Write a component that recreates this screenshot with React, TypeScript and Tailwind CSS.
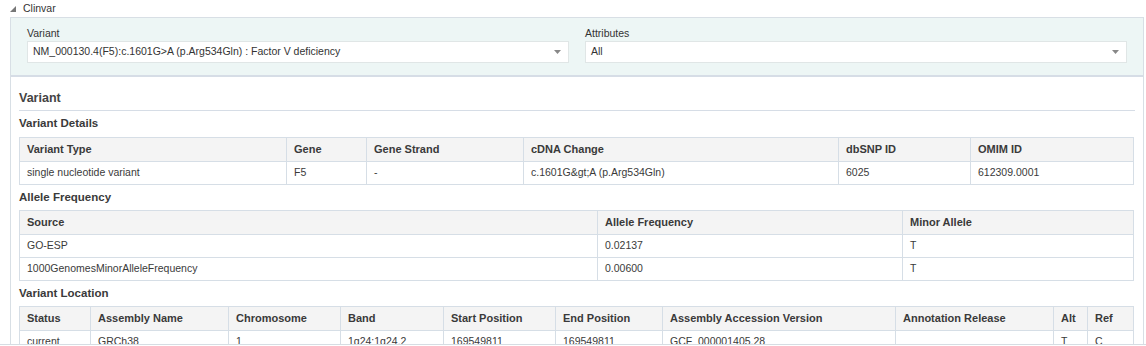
import React from 'react';

type Table = { widths: number[]; head: string[]; rows: string[][] };

const details: Table = {
  widths: [267, 80, 157, 315, 132, 163],
  head: ['Variant Type', 'Gene', 'Gene Strand', 'cDNA Change', 'dbSNP ID', 'OMIM ID'],
  rows: [['single nucleotide variant', 'F5', '-', 'c.1601G&gt;A (p.Arg534Gln)', '6025', '612309.0001']],
};

const frequency: Table = {
  widths: [578, 305, 231],
  head: ['Source', 'Allele Frequency', 'Minor Allele'],
  rows: [
    ['GO-ESP', '0.02137', 'T'],
    ['1000GenomesMinorAlleleFrequency', '0.00600', 'T'],
  ],
};

const location: Table = {
  widths: [71, 138, 112, 103, 112, 107, 233, 158, 34, 46],
  head: ['Status', 'Assembly Name', 'Chromosome', 'Band', 'Start Position', 'End Position', 'Assembly Accession Version', 'Annotation Release', 'Alt', 'Ref'],
  rows: [['current', 'GRCh38', '1', '1q24:1q24.2', '169549811', '169549811', 'GCF_000001405.28', '', 'T', 'C']],
};

function DataTable({ table }: { table: Table }) {
  return (
    <table className="w-[1114px] table-fixed border-collapse border border-[#d6dee6] text-[#333]">
      <colgroup>
        {table.widths.map((w, i) => (
          <col key={i} style={{ width: w }} />
        ))}
      </colgroup>
      <thead>
        <tr className="h-[24px] bg-[#f4f4f4]">
          {table.head.map((h) => (
            <th key={h} className="border border-[#d6dee6] px-[7px] text-left text-[11px] font-bold text-[#3a3a3a] whitespace-nowrap">
              {h}
            </th>
          ))}
        </tr>
      </thead>
      <tbody>
        {table.rows.map((r, i) => (
          <tr key={i} className="h-[23px] bg-white">
            {r.map((c, j) => (
              <td key={j} className="border-t border-l border-[#d6dee6] px-[7px] text-[10.5px] text-[#3a3a3a] whitespace-nowrap">
                {c}
              </td>
            ))}
          </tr>
        ))}
      </tbody>
    </table>
  );
}

function Select({ label, value }: { label: string; value: string }) {
  return (
    <div className="flex flex-col">
      <div className="h-[13px] text-[10.5px] leading-[13px] text-[#333]">{label}</div>
      <div className="mt-[1px] flex h-[22px] items-center justify-between border border-[#e0e6e6] bg-white pl-[5px] pr-[7px] text-[10.5px] text-[#333]">
        <span>{value}</span>
        <svg width="7" height="4" viewBox="0 0 7 4">
          <path d="M0 0 L7 0 L3.5 4 Z" fill="#888" />
        </svg>
      </div>
    </div>
  );
}

function SectionLabel({ children, h }: { children: React.ReactNode; h: string }) {
  return (
    <div className={`flex items-center text-[11.5px] font-bold text-[#3a3a3a] ${h}`}>{children}</div>
  );
}

export default function App() {
  return (
    <div className="h-[345px] w-[1146px] overflow-hidden border-b border-[#d6dde3] bg-white font-['Liberation_Sans',Arial,sans-serif]">
      <div className="flex h-[17px] items-center pl-[10px] text-[10.5px] text-[#333]">
        <svg width="6" height="6" viewBox="0 0 6 6" className="mr-[7px]">
          <path d="M6 0 L6 6 L0 6 Z" fill="#777" />
        </svg>
        Clinvar
      </div>
      <div className="ml-[10px] mr-[2px] border border-b-0 border-[#d8dfe5]">
        <div className="grid grid-cols-2 gap-4 border-b-2 border-[#d6dde6] bg-[#edf6f5] px-4 pt-[9px] pb-[12px]">
          <Select label="Variant" value="NM_000130.4(F5):c.1601G>A (p.Arg534Gln) : Factor V deficiency" />
          <Select label="Attributes" value="All" />
        </div>
        <div className="pl-[8px] pr-[8px]">
          <div className="flex h-[34px] items-end border-b border-[#d6dde6] pb-[2px] text-[12.5px] font-bold text-[#444]">
            Variant
          </div>
          <SectionLabel h="h-[26px]">Variant Details</SectionLabel>
          <DataTable table={details} />
          <SectionLabel h="h-[25px]">Allele Frequency</SectionLabel>
          <DataTable table={frequency} />
          <SectionLabel h="h-[25px]">Variant Location</SectionLabel>
          <DataTable table={location} />
        </div>
      </div>
    </div>
  );
}
